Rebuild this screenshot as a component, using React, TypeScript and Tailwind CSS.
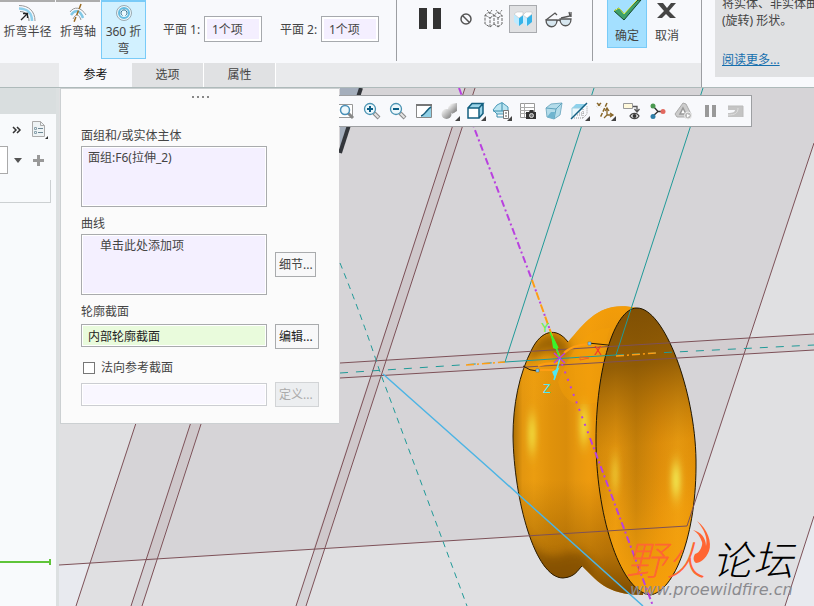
import type { ReactNode } from "react";

const FONT = "font-['Noto_Sans','Noto_Sans_CJK_SC',sans-serif]";

function Icon({ children }: { children: ReactNode }) {
  return (
    <svg width="20" height="20" viewBox="0 0 20 20" fill="none" className="shrink-0" aria-hidden="true">
      {children}
    </svg>
  );
}

const corner = <path d="M20 15v5h-5z" fill="#444" />;

const lens = (
  <>
    <path d="M12 12l5 5" stroke="#888" strokeWidth="4" />
    <path d="M12.500 12.500l4 4" stroke="#e4e4e4" strokeWidth="2" />
    <circle cx="8" cy="8" r="5.500" fill="#eef8fc" stroke="#4b93b2" strokeWidth="1.300" />
  </>
);

// graphics toolbar, left to right
const viewTools: { name: string; icon: ReactNode }[] = [
  {
    name: "重新调整",
    icon: (
      <>
        <path d="M0 3.500h16.500v13H0" fill="#fff" stroke="#999" />
        <path d="M12 12l5 5" stroke="#888" strokeWidth="3" />
        <circle cx="9" cy="9" r="4.500" fill="#eef8fc" stroke="#4a90b8" strokeWidth="1.500" />
      </>
    ),
  },
  { name: "放大", icon: <>{lens}<path d="M5 8h6M8 5v6" stroke="#0c5e86" strokeWidth="2" /></> },
  { name: "缩小", icon: <>{lens}<path d="M5 8h6" stroke="#0c5e86" strokeWidth="2" /></> },
  {
    name: "重画",
    icon: (
      <>
        <path d="M2.500 3.500h15v13h-15z" fill="#fff" stroke="#888" />
        <path d="M17 5v11H7c4-1 6-7 10-11z" fill="#8fd0e6" />
        <path d="M7 15c4-1 6-7 10-9" stroke="#17607f" strokeWidth="1.500" />
        <path d="M2 4h16" stroke="#777" strokeWidth="2" />
      </>
    ),
  },
  {
    name: "渲染选项",
    icon: (
      <>
        <path d="M10 3l7-1v8l-5 3z" fill="url(#metal)" />
        <circle cx="12" cy="8" r="4" fill="url(#metal)" />
        <circle cx="6.500" cy="13" r="5" fill="url(#metal)" />
        {corner}
      </>
    ),
  },
  {
    name: "显示样式",
    icon: (
      <>
        <path d="M2 7l4-4.500h11v10L13 17V7z" fill="#9bd4e8" />
        <path d="M2 7h11v10H2z" fill="#fff" />
        <path d="M2 7h11v10H2zM2 7l4-4.500h11L13 7M17 2.500v10L13 17" stroke="#146080" strokeWidth="1.500" />
        {corner}
      </>
    ),
  },
  {
    name: "已保存方向",
    icon: (
      <>
        <path d="M10 1.500l6 4.500v7H5l-4-4 4-5z" fill="#bce5f1" stroke="#4b9ab8" />
        <path d="M10 2v8M1 10h15M5 13v3h6" stroke="#398cab" />
        <path d="M11.500 9.500h5v8h-5z" fill="#fff" stroke="#777" />
        <path d="M13 12h2M13 15h2" stroke="#555" />
        {corner}
      </>
    ),
  },
  {
    name: "视图管理器",
    icon: (
      <>
        <path d="M2.500 2.500h14v14h-14z" fill="#fff" stroke="#999" />
        <path d="M2 6.500h14M2 9.500h14M2 12.500h14M6.500 2v14" stroke="#aaa" />
        <path d="M8 11h3l1-2h3l1 2h2v7H8z" fill="#333" />
        <circle cx="13.500" cy="14.500" r="2" fill="#777" stroke="#ddd" />
      </>
    ),
  },
  {
    name: "透视图",
    icon: (
      <>
        <path d="M2 7l5-4 11-1-2 12-6 4-7-2z" fill="#b4dcea" stroke="#7ab0c6" />
        <path d="M2 7l10 1 6-6M12 8l-2 10" stroke="#5fa3bd" />
        <path d="M3 16l4-5h4l-1 7z" fill="#6fb4cf" />
      </>
    ),
  },
  {
    name: "截面",
    icon: (
      <>
        <path d="M2 7l4-4h11l-4 4z" fill="#8ed1eb" />
        <path d="M2 7v10L13 7z" fill="#e9f7fc" stroke="#9ccfe0" />
        <path d="M4 17h9l4-4V5M13 8v9M7 14h6M9 12h6" stroke="#999" strokeDasharray="1 1" />
        <path d="M1 18L17 2" stroke="#155f80" strokeWidth="1.500" />
        {corner}
      </>
    ),
  },
  {
    name: "基准显示过滤器",
    icon: (
      <>
        <path d="M1 2l4 4M5 2L1 6M11 2L4 17" stroke="#88672a" strokeWidth="1.500" strokeDasharray="4 1.500" />
        <path d="M11 8v6h6M11 14l-3 3M9 10l2-3 2 3M14 12l3 2-3 2" stroke="#88672a" strokeWidth="1.300" />
        {corner}
      </>
    ),
  },
  {
    name: "注释显示",
    icon: (
      <>
        <path d="M1.500 2.500h9v5h-9z" fill="#fff9dc" stroke="#999" />
        <path d="M11 5.500h4V10M12.500 8l2.500 3 2.500-3" stroke="#555" strokeWidth="1.300" />
        <path d="M8 15c2-3.500 7-3.500 9 0-2 3.500-7 3.500-9 0z" fill="#fff" stroke="#444" strokeWidth="1.300" />
        <circle cx="12.500" cy="15" r="2" fill="#333" />
      </>
    ),
  },
  {
    name: "旋转中心",
    icon: (
      <>
        <path d="M5 5l5 5.500h5M10 10.500L5 15" stroke="#333" strokeWidth="1.300" />
        <circle cx="5" cy="5" r="2.500" fill="#4a9850" />
        <circle cx="5" cy="15.500" r="2.500" fill="#2e7fa8" />
        <circle cx="15" cy="10.500" r="2.500" fill="#e2685f" />
      </>
    ),
  },
  {
    name: "仿真",
    icon: (
      <>
        <path d="M9 2l3 1 5 10-2 3H3l-2-3z" fill="#ccc" stroke="#aaa" />
        <path d="M9 7l3 6H6z" fill="#fff" stroke="#999" strokeWidth="1.500" />
        <circle cx="14" cy="14.500" r="3.500" fill="#bbb" stroke="#eee" />
        <path d="M13 13l3 1.500-3 2z" fill="#fff" />
      </>
    ),
  },
  { name: "暂停仿真", icon: <path d="M5 4h4v12H5zM12 4h4v12h-4z" fill="#999" /> },
  {
    name: "停止",
    icon: (
      <>
        <path d="M2 5h15v11H2v-4c5 0 7-1 7-3H2z" fill="#c4c4c4" />
        <path d="M2 5h15v11" stroke="#bbb" />
        <path d="M12 7c0 5-3 7-10 7" stroke="#e0e0e0" />
      </>
    ),
  },
];

function PlaneField({ label }: { label: string }) {
  return (
    <label className="mt-4 flex shrink-0 items-center gap-[3px] self-start">
      <span className="w-[38px] whitespace-nowrap">{label}</span>
      <span className="h-[26px] w-[58px] border border-[#a6a9ad] bg-white p-[2px]">
        <input readOnly defaultValue="1个项" className="block h-full w-full bg-[#f4efff] pl-[5px] outline-none" />
      </span>
    </label>
  );
}

function Ribbon() {
  return (
    <div className="flex h-[63px] text-[12px] leading-[17px] text-[#444]">
      <button className="flex h-[59px] w-[55px] shrink-0 flex-col items-center border-t-2 border-[#adadad] pt-px whitespace-nowrap">
        <Icon>
          <path d="M1 2.500c10 0 16 6 16 15.500" stroke="#999" />
          <path d="M1 5.500c8 0 13 4.500 13 12.500" stroke="#8fd0ec" strokeWidth="2.500" />
          <path d="M2 8.500c5 0 9 3.500 9 9.500" stroke="#888" />
          <path d="M3 17L9 11M5 10.500h4.500V15" stroke="#222" strokeWidth="1.300" />
        </Icon>
        折弯半径
      </button>
      <button className="ml-px flex h-[59px] w-[44px] shrink-0 flex-col items-center border-t-2 border-[#adadad] pt-px whitespace-nowrap">
        <Icon>
          <path d="M2 9C6 3 13 4 18 12" stroke="#999" />
          <path d="M3 12c4-6 9-5 12 3" stroke="#80c8e6" strokeWidth="2.500" />
          <path d="M5 16c3-6 6-5 8 1" stroke="#999" />
          <path d="M13 1L6 19" stroke="#9a6a20" strokeWidth="1.500" strokeDasharray="5 2" />
        </Icon>
        折弯轴
      </button>
      <button className="ml-px flex h-[59px] w-[45px] shrink-0 flex-col items-center border border-t-2 border-[#79cbf8] bg-[#d2f1ff] px-px pt-px">
        <Icon>
          <circle cx="10" cy="10" r="7.500" fill="#eaf8fd" stroke="#9aa9b0" />
          <circle cx="10" cy="10" r="5" stroke="#65bce0" strokeWidth="2" />
          <path d="M8.500 12.500a3 3 0 1 1 3 0" stroke="#2d6d8d" />
        </Icon>
        360 折弯
      </button>
      <div className="ml-[17px] flex gap-[18px]">
        <PlaneField label="平面 1:" />
        <PlaneField label="平面 2:" />
      </div>
      <div className="ml-[17px] h-[61px] w-px shrink-0 bg-[#9c9ea2]" />
      <div className="ml-[17px] flex h-[38px] shrink-0 items-center">
        <button aria-label="暂停" className="h-6 w-[34px]">
          <svg width="34" height="24" aria-hidden="true"><path d="M5 1h8v21H5zM19 1h8v21h-8z" fill="#333" /></svg>
        </button>
        <button aria-label="无预览" className="flex w-[36px] justify-center">
          <svg width="14" height="14" fill="none" stroke="#555" strokeWidth="1.500" aria-hidden="true"><circle cx="7" cy="7" r="5" /><path d="M3.500 3.500l7 7" /></svg>
        </button>
        <button aria-label="未附加" className="flex w-5 justify-center">
          <Icon>
            <path d="M1 6l5 3v9l-5-3zM6 9l4-3v9l-4 3M10 6l4 3v9l-4-3M14 9l4-3v9l-4 3" stroke="#666" strokeDasharray="3 1" />
            <path d="M1 6l4-3 5 3 4-3 4 3M3 1l4 4M8 1L5 5M12 1l3 4M18 1l-3 4" stroke="#777" strokeDasharray="2 1" />
          </Icon>
        </button>
        <button aria-label="已附加" className="ml-[5px] flex h-7 w-7 items-center justify-center border border-[#a9abaf] bg-[#e0e1e3]">
          <Icon>
            <path d="M1 5l5 4v8l-5-4z" fill="#bdeaff" />
            <path d="M6 9l4-3v8l-4 3zM14 9l5-4v8l-5 4z" fill="#35b3e8" />
            <path d="M10 6l4 3v8l-4-3z" fill="#c9eeff" />
            <path d="M1 5l3-2h6v3L6 9zM10 6l3-3h6v2l-5 4z" fill="#fff" stroke="#bbb" strokeWidth=".5" />
          </Icon>
        </button>
        <button aria-label="预览" className="ml-[8px]">
          <svg width="28" height="20" viewBox="0 0 28 20" fill="none" stroke="#555" strokeWidth="1.300" aria-hidden="true">
            <path d="M1 11L10 4l2 2M16 9l9-2-1-4M26 8v-5" />
            <path d="M1 11h11c0 9-11 9-11 0zM15 10h11c0 9-11 9-11 0z" fill="#d7e7f0" />
            <path d="M12 12q2-2 3 0" />
          </svg>
        </button>
      </div>
      <div className="ml-[19px] h-[61px] w-px shrink-0 bg-[#9c9ea2]" />
      <button className="ml-[14px] flex h-[48px] w-[40px] shrink-0 flex-col items-center border border-t-0 border-[#79cbf8] bg-[#a4e0ff]">
        <svg width="30" height="27" viewBox="0 0 30 27" className="shrink-0" aria-hidden="true">
          <path d="M2 11l5-3 5 6L26 0h3L12 20z" fill="#3ea06a" stroke="#17472b" />
          <path d="M2 11l5-3 5 6L25 0" fill="none" stroke="#d8f24b" />
        </svg>
        确定
      </button>
      <button className="flex h-[48px] w-[40px] shrink-0 flex-col items-center">
        <svg width="22" height="27" viewBox="0 0 22 27" className="shrink-0" aria-hidden="true">
          <path d="M1 3h6l4 5 4-5h5l-7 8 7 7h-6l-4-4-4 4H1l7-7z" fill="#454545" />
        </svg>
        取消
      </button>
    </div>
  );
}

function Header() {
  return (
    <header className="flex h-[88px] shrink-0 border-b border-[#aebaba] bg-[#f8f9fc]">
      <div className="min-w-0 flex-1">
        <Ribbon />
        <div role="tablist" className="flex h-6 bg-[#e9eaec] pl-[59px] text-[12px] text-[#444]">
          <button role="tab" aria-selected="true" className="w-[73px] bg-[#f8f9fc] text-[#111]">参考</button>
          <button role="tab" aria-selected="false" className="w-[72px] border-r border-white bg-[#e0e1e3]">选项</button>
          <button role="tab" aria-selected="false" className="w-[72px] border-r border-white bg-[#e0e1e3]">属性</button>
        </div>
      </div>
      <aside className="w-[113px] shrink-0 border-l border-[#9c9ea2] pl-[13px]">
        <div className="flex h-[77px] flex-col justify-end overflow-hidden bg-[#e0e1e3] pb-[9px] pl-[7px] text-[12px] leading-[17px] whitespace-nowrap text-[#444]">
          <p>将实体、非实体曲</p>
          <p>(旋转) 形状。</p>
          <a href="#more" className="mt-[22px] text-[#166fae] underline">阅读更多...</a>
        </div>
      </aside>
    </header>
  );
}

function Sidebar() {
  return (
    <nav className="flex w-[59px] shrink-0 flex-col border-r-[3px] border-[#dce0e1] bg-[#f8fafc]">
      <div className="h-[26px] bg-[#d9dedf]" />
      <div className="flex h-[31px] items-center pl-[12px]">
        <button aria-label="展开" className="w-[10px]">
          <svg width="10" height="10" fill="none" stroke="#333" strokeWidth="1.500" aria-hidden="true"><path d="M1 2l3 3-3 3M5 2l3 3-3 3" /></svg>
        </button>
        <button aria-label="设置" className="ml-[9px]">
          <svg width="18" height="20" fill="none" aria-hidden="true">
            <path d="M1.500 1.500h8l4 4v11h-12z" fill="#eef3f5" stroke="#aaa" />
            <path d="M9.500 1.500v4h4" stroke="#aaa" />
            <path d="M7 8.500h5M7 12.500h5" stroke="#6b8795" />
            <path d="M3.500 7.500h2v2h-2zM3.500 11.500h2v2h-2z" stroke="#8ba3ae" />
            <path d="M17 16v3h-3z" fill="#333" />
          </svg>
        </button>
      </div>
      <div className="mt-px flex h-[28px] items-center">
        <input aria-label="过滤" className="h-full w-[8px] border border-l-0 border-[#aaa] bg-white" />
        <button aria-label="过滤选项" className="ml-[6px]">
          <svg width="8" height="5" aria-hidden="true"><path d="M0 0h8L4 5z" fill="#555" /></svg>
        </button>
        <button aria-label="添加" className="ml-[11px]">
          <svg width="11" height="11" aria-hidden="true"><path d="M4 0h3v4h4v3H7v4H4V7H0V4h4z" fill="#999" /></svg>
        </button>
      </div>
      <div className="mt-[6px] mr-[5px] h-[23px] border-r border-b border-[#ccd0d2]" />
      <div className="mt-auto mr-[5px] mb-[43px] flex h-[2px] items-center bg-[#5fc439]">
        <div className="ml-auto h-[6px] w-[2px] shrink-0 bg-[#5fc439]" />
      </div>
    </nav>
  );
}

function Scene() {
  return (
    <svg className="absolute inset-0 h-full w-full" viewBox="59 88 755 518" preserveAspectRatio="xMinYMin slice" fill="none" aria-hidden="true">
      <defs>
        <linearGradient id="metal" x1="0" y1="0" x2="1" y2="1">
          <stop offset="0" stopColor="#fff" />
          <stop offset="1" stopColor="#777" />
        </linearGradient>
        <linearGradient id="rim" gradientUnits="userSpaceOnUse" x1="513" y1="0" x2="608" y2="0">
          <stop offset="0" stopColor="#ad7106" />
          <stop offset=".1" stopColor="#e3960f" />
          <stop offset=".22" stopColor="#eb9d10" />
          <stop offset=".4" stopColor="#e0920b" />
          <stop offset=".56" stopColor="#da8d0b" />
          <stop offset=".66" stopColor="#e5960e" />
          <stop offset=".8" stopColor="#ee9b0e" />
          <stop offset="1" stopColor="#df8e0b" />
        </linearGradient>
        <linearGradient id="rimShade" gradientUnits="userSpaceOnUse" x1="0" y1="306" x2="0" y2="596">
          <stop offset="0" stopColor="#f8a008" stopOpacity=".8" />
          <stop offset=".35" stopColor="#f0a010" stopOpacity="0" />
          <stop offset=".6" stopColor="#8a5400" stopOpacity="0" />
          <stop offset=".85" stopColor="#8a5400" stopOpacity=".5" />
          <stop offset="1" stopColor="#6f4300" stopOpacity=".9" />
        </linearGradient>
        <linearGradient id="bore" gradientUnits="userSpaceOnUse" x1="596" y1="0" x2="696" y2="0">
          <stop offset="0" stopColor="#d98d0a" />
          <stop offset=".2" stopColor="#ea9a10" />
          <stop offset=".4" stopColor="#c8820a" />
          <stop offset=".65" stopColor="#e6930c" />
          <stop offset=".82" stopColor="#efa012" />
          <stop offset="1" stopColor="#e79308" />
        </linearGradient>
        <linearGradient id="boreShade" gradientUnits="userSpaceOnUse" x1="626" y1="308" x2="662" y2="595">
          <stop offset="0" stopColor="#805004" />
          <stop offset=".2" stopColor="#855404" stopOpacity=".85" />
          <stop offset=".48" stopColor="#a86904" stopOpacity=".15" />
          <stop offset=".7" stopColor="#f5a00a" stopOpacity=".2" />
          <stop offset="1" stopColor="#f8a00a" />
        </linearGradient>
        <filter id="soft" x="-200%" y="-50%" width="500%" height="200%">
          <feGaussianBlur stdDeviation="3 8" />
        </filter>
        <filter id="shade" x="-50%" y="-50%" width="200%" height="200%">
          <feGaussianBlur stdDeviation="5" />
        </filter>
        <clipPath id="rimClip">
          <path d="M568 342C556 326 541 331 532 349C519 374 513 405 513 436C514 500 535 578 563 578C575 577 577 571 582 566C596 579 605 595 643 595L637 308C601 300 587 320 568 342Z" />
        </clipPath>
      </defs>

      <path d="M59 88H814V606H59z" fill="#e0e0e2" />
      <path d="M246 88H814V143L687 526L90 563z" fill="#d6d4d7" />
      <path d="M59 565L89 563L76 606H59zM814 516V606H785z" fill="#e8eaef" />
      <path d="M340 88h21l-21 64z" fill="#a4aebc" />
      <path d="M361 88L340 153" stroke="#33363b" strokeWidth="4" />
      <path d="M300 88h10L142 606h-11zM465 88h10L306 606h-10z" fill="#d6d4d7" />
      <path d="M300 88h10L156 560l-10 1zM465 88h10L324 549l-11 1z" fill="#cfc8cb" />
      <path d="M340 363L814 334V350L340 378z" fill="#cfc8cb" opacity=".6" />

      <path d="M568 342C556 326 541 331 532 349C519 374 513 405 513 436C514 500 535 578 563 578C575 577 577 571 582 566C596 579 605 595 643 595L637 308C601 300 587 320 568 342Z" fill="url(#rim)" />
      <g clipPath="url(#rimClip)">
        <path d="M500 300h150v300H500z" fill="url(#rimShade)" />
        <path d="M528 352q20-34 42-6l-6 14q-16-18-36 4z" fill="#835205" opacity=".75" filter="url(#shade)" />
        <path d="M524 530q15 34 40 24t30 20l-10 20h-50z" fill="#7d4c02" opacity=".7" filter="url(#shade)" />
        <ellipse cx="532" cy="434" rx="3" ry="20" fill="#f2ee4c" filter="url(#soft)" />
        <ellipse cx="584" cy="425" rx="4" ry="20" fill="#f2e33f" filter="url(#soft)" />
      </g>
      <path d="M558 382q6 22 24 22t20-6q-4-30 8-70-30-2-52 54z" fill="#f5a008" opacity=".4" />
      <path d="M637 308C664 308 695 390 696 460C697 535 674 592 650 595C618 590 596 510 596 440C596 370 614 308 637 308Z" fill="url(#bore)" />
      <path d="M637 308C664 308 695 390 696 460C697 535 674 592 650 595C618 590 596 510 596 440C596 370 614 308 637 308Z" fill="url(#boreShade)" stroke="#1d1605" />
      <ellipse cx="676" cy="480" rx="4" ry="18" fill="#f2f25a" filter="url(#soft)" />
      <ellipse cx="615" cy="474" rx="2" ry="18" fill="#f2ea4c" filter="url(#soft)" />
      <path d="M568 342C556 326 541 331 532 349C519 374 513 405 513 436C514 500 535 578 563 578C575 577 577 571 582 566" stroke="#2a1d05" />

      <g stroke="#7d5158">
        <path d="M136 423L76 606M300 88L131 606M310 88L142 606M465 88L296 606M475 88L306 606" />
        <path d="M59 565L687 526L814 143M814 516L785 606M340 363L814 334M340 378L814 350" />
      </g>
      <g stroke="#209a98">
        <path d="M594 88L505 362L616 355L703 88" />
        <path d="M340 263Q362 317 380 372L467 606" strokeDasharray="6 5" />
        <path d="M340 373L505 362M616 355L814 345" strokeDasharray="8 8" />
      </g>
      <path d="M466 365L505 362M616 356L656 353" stroke="#ff9d13" strokeWidth="1.500" strokeDasharray="8 3 2 3" />
      <path d="M383 374L490 469L643 606" stroke="#4db4e4" strokeWidth="1.500" />
      <g strokeWidth="1.500">
        <path d="M459 88L532 280M590 438L653 606" stroke="#b941df" strokeWidth="2" strokeDasharray="7 3 2 3" />
        <path d="M532 280L560 358" stroke="#ff9d13" strokeWidth="2" strokeDasharray="8 5" />
        <path d="M562 364L590 438" stroke="#b941df" strokeWidth="2" strokeDasharray="2 6" />
        <path d="M532 280L560 358" stroke="#b941df" strokeWidth="2" strokeDasharray="2 11" strokeDashoffset="3" />
        <path d="M550 332L560 358M552 336l6 12" stroke="#3af52a" />
        <path d="M551 335l2 13 5 2z" fill="#3af52a" />
        <path d="M560 358L554 380" stroke="#4fe9f3" />
        <path d="M558 369l-3 8-2-5z" fill="#4fe9f3" stroke="#4fe9f3" />
      </g>
      <path d="M564 353q8-8 25-9M538 366q6-3 20-3M540 370h14" stroke="#ff9d13" strokeWidth="2" />
      <path d="M588 343l20 2M523 366q7 5 14 5" stroke="#2a1d05" />
      <path d="M580 357l9 1-9 2z" stroke="#f0602c" />
      <path d="M588 342h3v3h-3zM536 369h3v3h-3z" fill="#8ac8ec" stroke="#3878a0" strokeWidth=".5" />
      <path d="M554 353l11 10M565 353l-11 10" stroke="#b941df" strokeWidth="1.500" />
      <g className="font-['Liberation_Mono',monospace] text-[13px]">
        <text x="541" y="332" fill="#5cf348">Y</text>
        <text x="594" y="355" fill="#f3372c">X</text>
        <text x="543" y="393" fill="#4fe9f3">Z</text>
      </g>

      <g className="font-['Noto_Sans_CJK_SC',sans-serif] text-[40px] font-light italic">
        <text x="626" y="575" fill="#ff6633">野</text>
        <text x="666" y="575" fill="#ff6633">火</text>
        <text x="712" y="575" fill="#000">论</text>
        <text x="753" y="575" fill="#000">坛</text>
      </g>
      <path d="M697 521C708 529 712 543 709 551C706 559 700 563 696 563C693 561 693 557 695 554C700 553 703 545 702 542C700 536 697 532 693 530C701 532 706 538 706 546C708 538 704 529 697 521Z" fill="#ff6633" />
      <text x="630" y="595" fill="#8b8b8f" className="font-['DejaVu_Sans',sans-serif] text-[16px] italic">www.proewildfire.cn</text>
    </svg>
  );
}

const fieldFrame = "w-[186px] shrink-0 border bg-white p-px";
const sideButton = "h-[25px] shrink-0 border text-left pl-[3px] whitespace-nowrap";

function ReferencesPanel() {
  return (
    <section className="absolute top-0 left-px w-[279px] border-t border-b border-l border-[#ccd0d2] bg-[#fbfbfb] pb-4 pl-5 text-[12px] leading-4 text-[#444]">
      <div className="flex h-[39px] justify-center gap-[3px] pt-[7px] pr-5">
        {[0, 1, 2, 3].map((i) => (
          <span key={i} className="h-[2px] w-[2px] bg-[#888]" />
        ))}
      </div>
      <label htmlFor="quilts" className="mb-[2px] block">面组和/或实体主体</label>
      <div className={`${fieldFrame} h-[61px] border-[#a9abad]`}>
        <textarea id="quilts" readOnly defaultValue="面组:F6(拉伸_2)" className="block h-full w-full resize-none bg-[#f4f0ff] px-[5px] py-[2px] outline-none" />
      </div>
      <label htmlFor="curves" className="mt-[9px] mb-[2px] block">曲线</label>
      <div className="flex items-center gap-[8px]">
        <div className={`${fieldFrame} h-[61px] border-[#a9abad]`}>
          <textarea id="curves" readOnly defaultValue="单击此处添加项" className="block h-full w-full resize-none bg-[#f4f0ff] px-[17px] py-[2px] outline-none" />
        </div>
        <button className={`${sideButton} w-[41px] border-[#a9abad] bg-[#f8f8f9]`}>细节...</button>
      </div>
      <label htmlFor="profile" className="mt-[9px] mb-[4px] block">轮廓截面</label>
      <div className="flex items-start gap-[8px]">
        <div className={`${fieldFrame} h-[23px] border-[#a9abad]`}>
          <input id="profile" readOnly defaultValue="内部轮廓截面" className="block h-full w-full bg-[#e9fbdc] px-[5px] text-[#222] outline-none" />
        </div>
        <button className={`${sideButton} w-[44px] border-[#a9abad] bg-[#f8f8f9] text-[#222]`}>编辑...</button>
      </div>
      <label className="mt-[11px] mb-[6px] flex items-center gap-[6px] pl-[2px]">
        <input type="checkbox" className="h-[12px] w-[12px] appearance-none border border-[#777] bg-white" />
        法向参考截面
      </label>
      <div className="flex items-center gap-[8px]">
        <div className={`${fieldFrame} h-[23px] border-[#ccced2]`}>
          <input aria-label="法向参考" disabled className="block h-full w-full bg-[#f9f7ff]" />
        </div>
        <button disabled className={`${sideButton} w-[44px] border-[#d2d4d6] bg-[#eceef0] text-[#aaa]`}>定义...</button>
      </div>
    </section>
  );
}

export default function App() {
  return (
    <div className={`flex h-screen flex-col overflow-hidden bg-[#f8f9fc] ${FONT}`}>
      <Header />
      <div className="flex min-h-0 flex-1">
        <Sidebar />
        <main className="relative min-w-0 flex-1 overflow-hidden">
          <Scene />
          <div role="toolbar" className="absolute top-[7px] left-[273px] flex h-8 border border-[#9d9fa2] bg-[#f8f9fc] pr-[2px]">
            {viewTools.map((tool) => (
              <button key={tool.name} aria-label={tool.name} className="flex w-[26px] shrink-0 items-center justify-center">
                <Icon>{tool.icon}</Icon>
              </button>
            ))}
          </div>
          <ReferencesPanel />
        </main>
      </div>
    </div>
  );
}
